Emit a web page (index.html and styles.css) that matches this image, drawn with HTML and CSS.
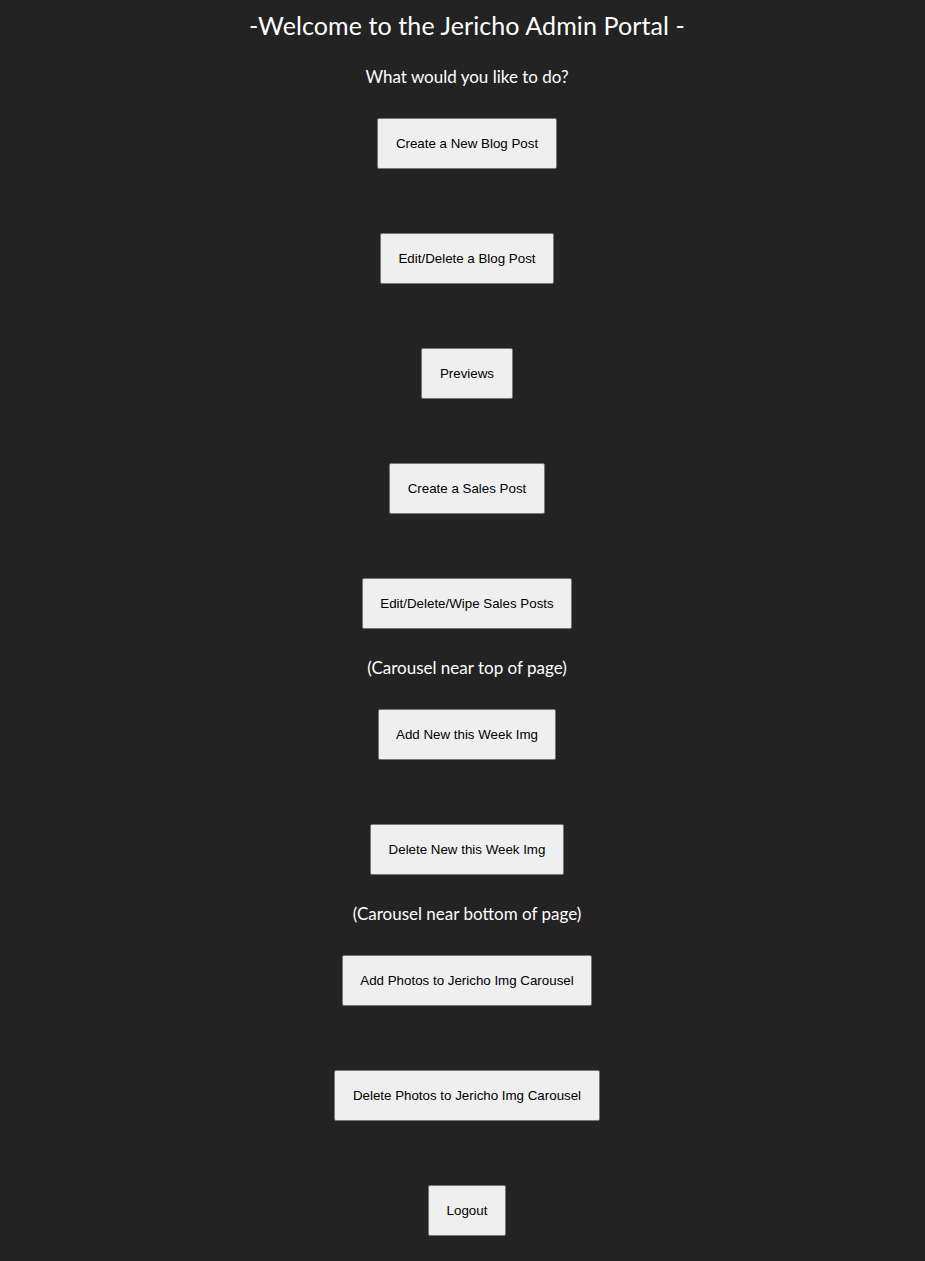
FILE: index.html
```html
<!DOCTYPE html>
<html>
<head>
<meta charset="utf-8">
<title>Jericho Admin Portal</title>
<link rel="stylesheet" href="styles.css">
</head>
<body>
<main class="portal">
  <h1 class="title">-Welcome to the Jericho Admin Portal -</h1>
  <p class="subtitle">What would you like to do?</p>
  <button class="btn first">Create a New Blog Post</button>
  <button class="btn">Edit/Delete a Blog Post</button>
  <button class="btn">Previews</button>
  <button class="btn">Create a Sales Post</button>
  <button class="btn">Edit/Delete/Wipe Sales Posts</button>
  <p class="section">(Carousel near top of page)</p>
  <button class="btn first">Add New this Week Img</button>
  <button class="btn">Delete New this Week Img</button>
  <p class="section">(Carousel near bottom of page)</p>
  <button class="btn first">Add Photos to Jericho Img Carousel</button>
  <button class="btn">Delete Photos to Jericho Img Carousel</button>
  <button class="btn">Logout</button>
</main>
</body>
</html>
```

FILE: styles.css
```css
html, body {
  margin: 0;
  padding: 0;
  background: #232323;
}
.portal {
  display: flex;
  flex-direction: column;
  align-items: center;
  color: #ffffff;
  font-family: Lato, "Open Sans", sans-serif;
  padding: 10px 0 0 9px;
}
.title {
  margin: 0;
  font-size: 25px;
  line-height: 30px;
  font-weight: 400;
  letter-spacing: 0.1px;
}
.subtitle {
  margin: 26px 0 0;
  font-size: 17px;
  line-height: 22px;
}
.section {
  margin: 28px 0 0;
  font-size: 17px;
  line-height: 22px;
}
.btn {
  margin-top: 64px;
  height: 51px;
  padding: 0 17.5px;
  background: #efefef;
  border: 1px solid #767676;
  border-radius: 2px;
  color: #000;
  font-family: "Liberation Sans", Arial, sans-serif;
  font-size: 13.333px;
}
.btn.first {
  margin-top: 30px;
}
```
